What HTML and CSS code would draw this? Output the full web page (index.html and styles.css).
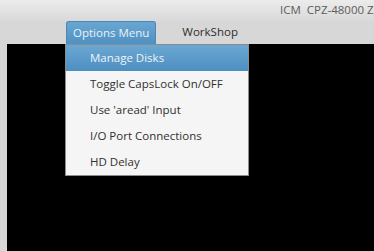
FILE: index.html
```html
<!DOCTYPE html>
<html lang="en">
<head>
    <meta charset="UTF-8">
    <title>ICM CPZ-48000</title>
    <link rel="stylesheet" href="styles.css">
</head>
<body>
    <div class="window">
        <div class="titlebar">
            <span class="title">ICM&nbsp;&nbsp;CPZ-48000 Z80</span>
        </div>
        <div class="menubar">
            <div class="menu-tab active">Options Menu</div>
            <div class="menu-tab">WorkShop</div>
        </div>
        <div class="screen">
            <ul class="dropdown">
                <li class="selected">Manage Disks</li>
                <li>Toggle CapsLock On/OFF</li>
                <li>Use 'aread' Input</li>
                <li>I/O Port Connections</li>
                <li>HD Delay</li>
            </ul>
        </div>
    </div>
</body>
</html>
```

FILE: styles.css
```css
body {
    margin: 0;
    font-family: 'Open Sans', sans-serif;
    font-size: 11.5px;
    overflow: hidden;
}

.window {
    width: 374px;
    height: 251px;
    display: flex;
    flex-direction: column;
    background-color: #d7d7d7;
}

.titlebar {
    height: 21px;
    flex-shrink: 0;
    background: linear-gradient(#ececec, #d9d9d9);
    padding-left: 280px;
    white-space: nowrap;
    overflow: hidden;
    line-height: 20px;
}

.title {
    color: #5c5c5c;
}

.menubar {
    height: 23px;
    flex-shrink: 0;
    display: flex;
    padding-left: 66px;
}

.menu-tab {
    padding: 0 8px;
    line-height: 22px;
    color: #2e2e2e;
    border-radius: 3px 3px 0 0;
}

.menu-tab.active {
    background: linear-gradient(#6aa6d2, #4f91c2);
    color: #eaf2f8;
    border: 1px solid #4a88b6;
    border-bottom: none;
    line-height: 21px;
    padding: 0 6px;
    margin-right: 18px;
}

.screen {
    flex: 1;
    margin-left: 7px;
    background-color: #000;
    position: relative;
}

.dropdown {
    position: absolute;
    left: 58px;
    top: 0;
    width: 182px;
    margin: 0;
    padding: 0;
    list-style: none;
    background-color: #f5f5f5;
    border: 1px solid #8c8c8c;
}

.dropdown li {
    height: 26px;
    line-height: 26px;
    padding-left: 24px;
    color: #303030;
}

.dropdown li.selected {
    background: linear-gradient(#6ba7d3, #4d8fc1);
    color: #eef4f9;
}
```
